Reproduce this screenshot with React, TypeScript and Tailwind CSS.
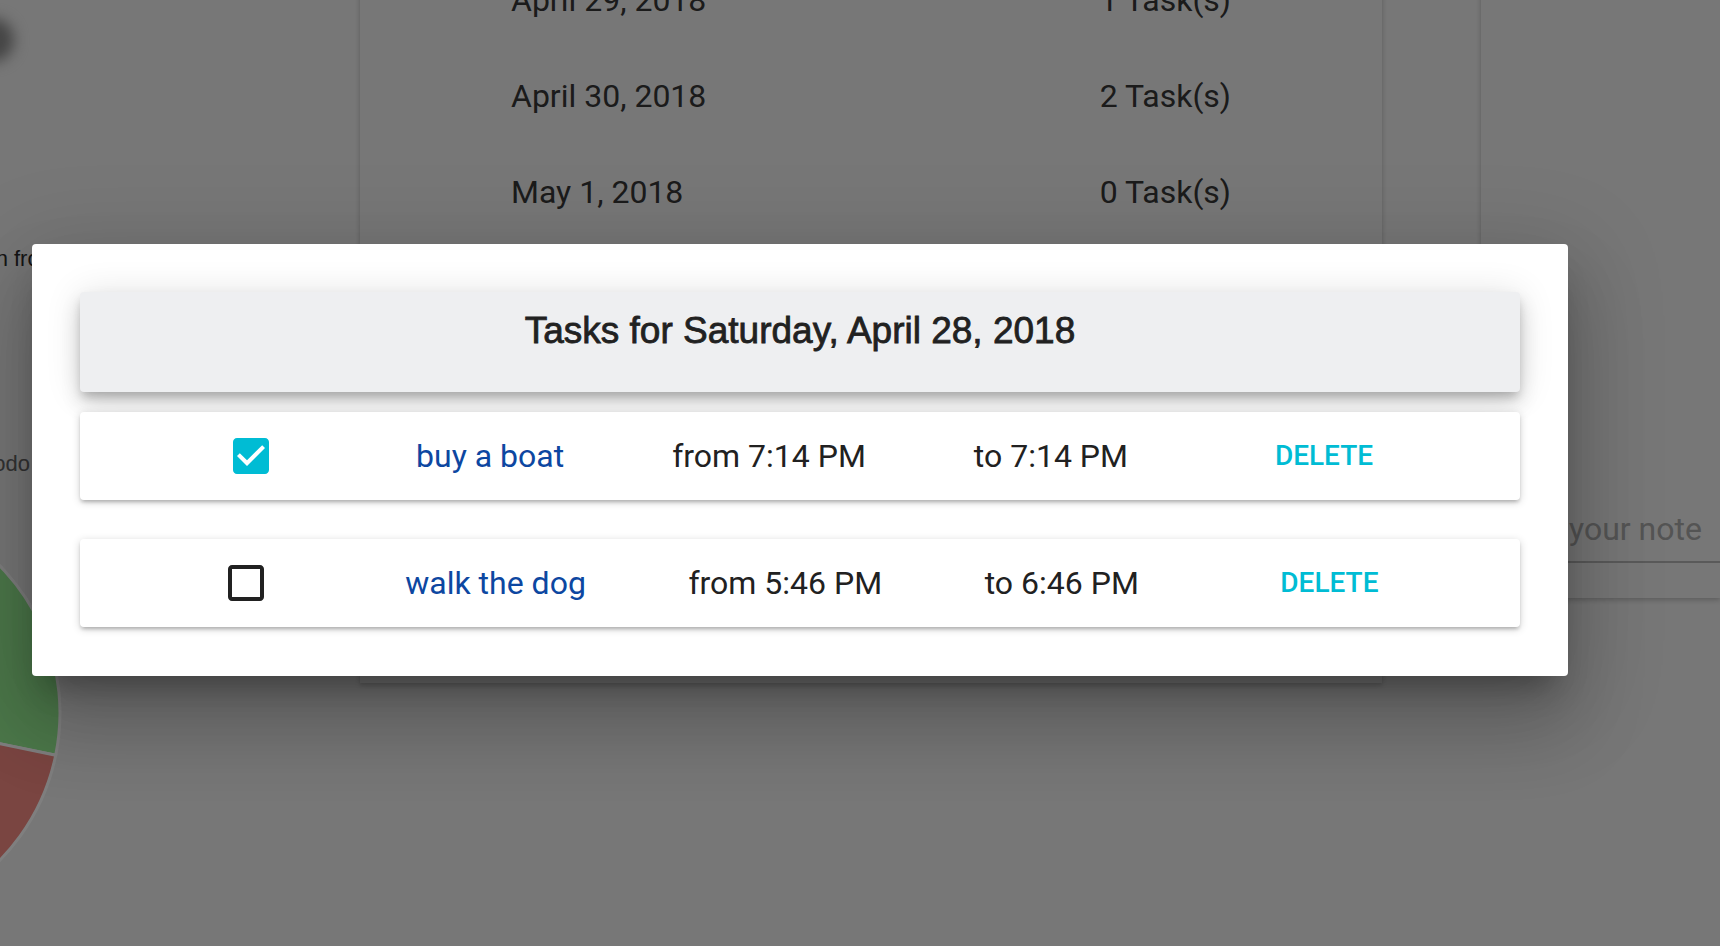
import React from "react";

function CheckedBox() {
  return (
    <svg width="48" height="48" viewBox="0 0 24 24">
      <path
        fill="#00bcd4"
        d="M19 3H5c-1.11 0-2 .9-2 2v14c0 1.1.89 2 2 2h14c1.11 0 2-.9 2-2V5c0-1.1-.89-2-2-2zm-9 14l-5-5 1.41-1.41L10 14.17l7.59-7.59L19 8l-9 9z"
      />
    </svg>
  );
}

function EmptyBox() {
  return (
    <svg width="48" height="48" viewBox="0 0 24 24">
      <path
        fill="#212121"
        d="M19 5v14H5V5h14m0-2H5c-1.1 0-2 .9-2 2v14c0 1.1.9 2 2 2h14c1.1 0 2-.9 2-2V5c0-1.1-.9-2-2-2z"
      />
    </svg>
  );
}

type Task = { done: boolean; name: string; from: string; to: string };

const tasks: Task[] = [
  { done: true, name: "buy a boat", from: "from 7:14 PM", to: "to 7:14 PM" },
  { done: false, name: "walk the dog", from: "from 5:46 PM", to: "to 6:46 PM" },
];

const days = [
  { d: "April 29, 2018", n: "1 Task(s)" },
  { d: "April 30, 2018", n: "2 Task(s)" },
  { d: "May 1, 2018", n: "0 Task(s)" },
  { d: "May 2, 2018", n: "0 Task(s)" },
  { d: "May 3, 2018", n: "0 Task(s)" },
  { d: "May 4, 2018", n: "0 Task(s)" },
  { d: "May 5, 2018", n: "0 Task(s)" },
];

export default function App() {
  return (
    <div className="relative h-[946px] w-[1720px] overflow-hidden bg-[#eeeeee] font-['Roboto',sans-serif]">
      {/* underlying page */}
      <div className="flex h-full">
        {/* left column */}
        <div className="flex w-[360px] shrink-0 flex-col">
          <div className="-ml-[30px] mt-[18px] h-[44px] w-[44px] rounded-full bg-[#8a8a8a] blur-[7px]" />
          <div className="mt-[184px] flex h-[25px] whitespace-nowrap font-['Liberation_Sans',Arial,sans-serif] text-[22px] leading-[25px] text-[#2a2a2a]">
            <div className="flex w-[8px] justify-end">
              <span>Completion</span>
            </div>
            <span className="ml-[6px]">from today</span>
          </div>
          <div className="mt-[180px] flex h-[25px] w-[30px] justify-end whitespace-nowrap font-['Liberation_Sans',Arial,sans-serif] text-[22px] leading-[25px] text-[#666666]">
            <span>Todo</span>
          </div>
          <svg className="mt-[24px]" width="70" height="380" viewBox="0 0 70 380">
            <path
              d="M -150 213 L -45 31.1 A 210 210 0 0 1 55.7 255.2 Z"
              fill="#98f094"
              stroke="#ffffff"
              strokeWidth="3"
            />
            <path
              d="M -150 213 L 55.7 255.2 A 210 210 0 0 1 -45 394.9 Z"
              fill="#f48a82"
              stroke="#ffffff"
              strokeWidth="3"
            />
          </svg>
        </div>

        {/* center card */}
        <div className="-mt-[48px] h-[731px] w-[1022px] shrink-0 bg-[#efefef] shadow-[0_2px_5px_rgba(0,0,0,0.22)]">
          {days.map((r) => (
            <div
              key={r.d}
              className="flex h-[96px] items-center justify-between px-[151px] text-[32px] text-[#363636]"
            >
              <span>{r.d}</span>
              <span>{r.n}</span>
            </div>
          ))}
        </div>

        <div className="w-[99px] shrink-0" />

        {/* right card */}
        <div className="-mt-[20px] flex h-[618px] flex-1 flex-col justify-end bg-[#efefef] pb-[35px] shadow-[0_2px_5px_rgba(0,0,0,0.22)]">
          <div className="ml-[20px] flex border-b-2 border-[#b4b4b4] pb-[13px] text-[32px] leading-[37.5px] whitespace-nowrap text-[#a8a8a8]">
            <div className="flex w-[60px] justify-end">
              <span>Add</span>
            </div>
            <span className="ml-[8px]">your note</span>
          </div>
        </div>
      </div>

      {/* backdrop */}
      <div className="absolute inset-0 bg-black/50" />

      {/* dialog */}
      <div className="absolute left-[32px] top-[244px] flex h-[432px] w-[1536px] flex-col rounded-[4px] bg-white p-[48px] shadow-[0_22px_30px_-14px_rgba(0,0,0,0.32),0_48px_76px_6px_rgba(0,0,0,0.16),0_18px_92px_16px_rgba(0,0,0,0.12)]">
        <div className="h-[100px] rounded-[4px] bg-[#eeeff1] pt-[18px] text-center font-['Liberation_Sans',Arial,sans-serif] text-[37px] leading-[42px] text-[#212121] [-webkit-text-stroke:0.8px_#212121] shadow-[0_6px_10px_-2px_rgba(0,0,0,0.2),0_12px_20px_0_rgba(0,0,0,0.14),0_2px_36px_0_rgba(0,0,0,0.12)]">
          Tasks for Saturday, April 28, 2018
        </div>
        <div className="mt-[20px] flex flex-col gap-[39px]">
          {tasks.map((t) => (
            <div
              key={t.name}
              className="flex h-[88px] items-center justify-evenly rounded-[4px] bg-white text-[32px] text-[#212121] shadow-[0_2px_8px_0_rgba(0,0,0,0.18),0_3px_3px_0_rgba(0,0,0,0.12),0_5px_2px_-4px_rgba(0,0,0,0.1)]"
            >
              <div className="flex w-[120px] items-center">
                <div className="ml-[39px]">{t.done ? <CheckedBox /> : <EmptyBox />}</div>
              </div>
              <span className="whitespace-nowrap text-[#0d47a1]">{t.name}</span>
              <span className="whitespace-nowrap">{t.from}</span>
              <span className="whitespace-nowrap">{t.to}</span>
              <div className="flex h-[72px] w-[176px] items-center justify-center text-[28px] font-medium uppercase text-[#00bcd4]">
                Delete
              </div>
            </div>
          ))}
        </div>
      </div>
    </div>
  );
}
